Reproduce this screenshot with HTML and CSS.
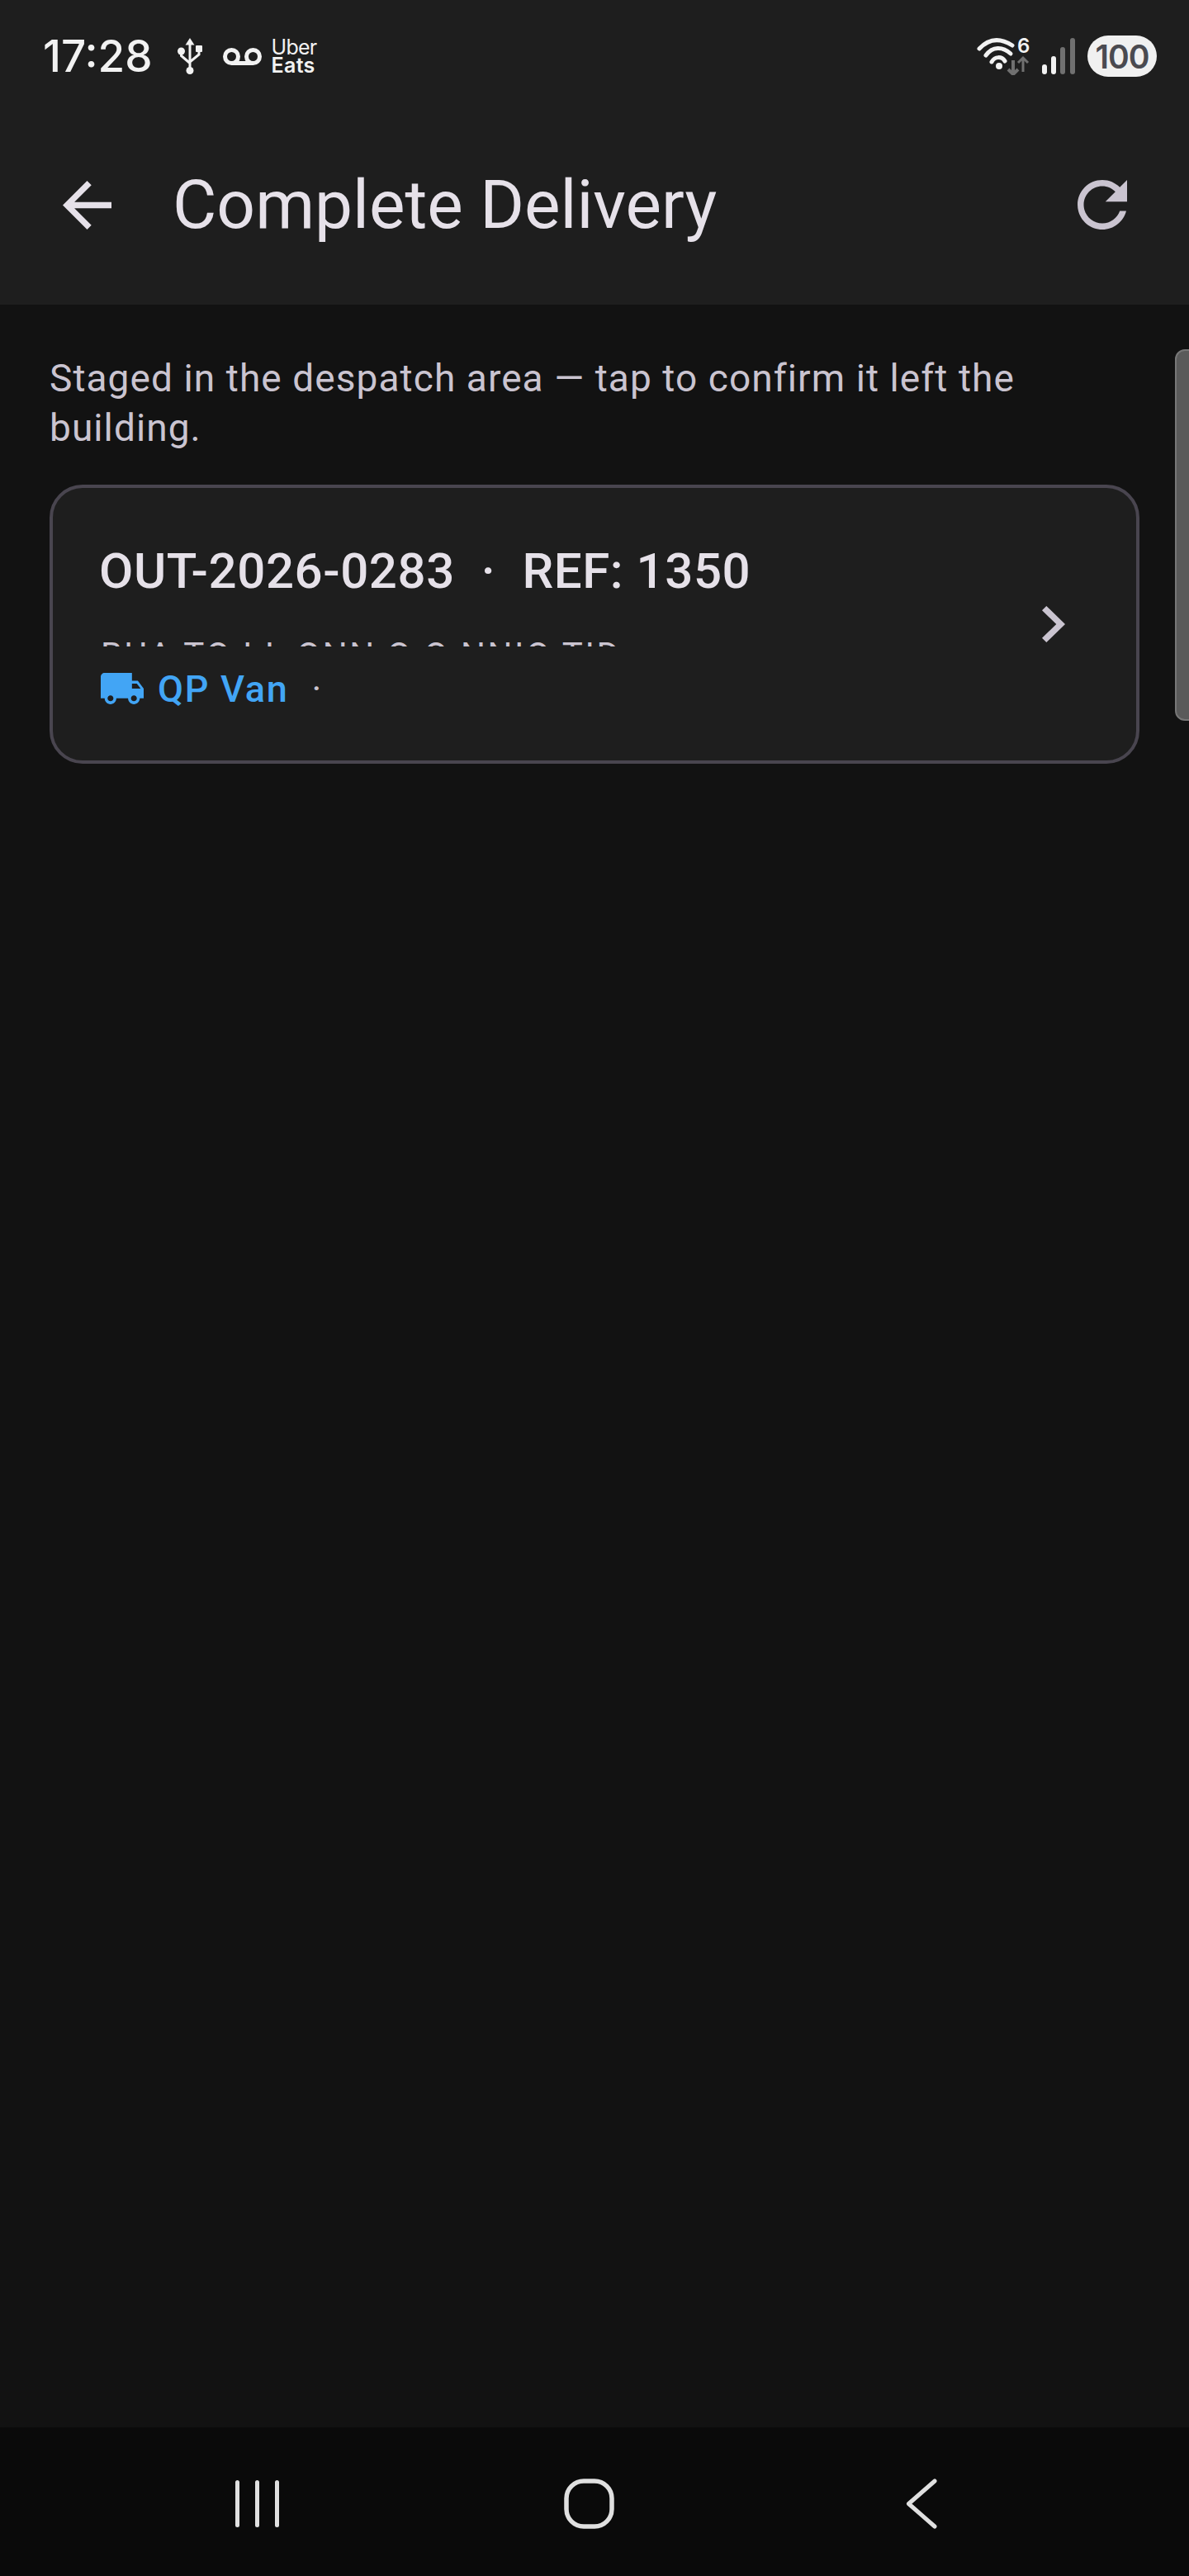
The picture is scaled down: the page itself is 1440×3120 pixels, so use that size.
FILE: index.html
```html
<!DOCTYPE html>
<html>
<head>
    <title>Complete Delivery</title>
    <link rel="stylesheet" href="styles.css">
</head>
<body>
    <div class="screen">
        <header class="top">
            <div class="status">
                <div class="status-left">
                    <span class="time">17:28</span>
                    <svg class="ic-usb" width="30" height="44" viewBox="0 0 30 44">
                        <path d="M15 0l5.500 8.500h-11z" fill="#f2f2f2"/>
                        <path d="M15 8v31M4.500 16v5.500L15 30.500M26 13v7l-11 9" fill="none" stroke="#f2f2f2" stroke-width="3"/>
                        <circle cx="15" cy="39.500" r="4.500" fill="#f2f2f2"/>
                        <circle cx="4.500" cy="16" r="4.500" fill="#f2f2f2"/>
                        <rect x="22" y="9" width="8" height="8" rx="1" fill="#f2f2f2"/>
                    </svg>
                    <svg class="ic-voicemail" width="47" height="21" viewBox="0 0 47 21">
                        <circle cx="10.500" cy="10.500" r="8" fill="none" stroke="#f2f2f2" stroke-width="5"/>
                        <circle cx="36.500" cy="10.500" r="8" fill="none" stroke="#f2f2f2" stroke-width="5"/>
                        <path d="M10.500 18.500h26" stroke="#f2f2f2" stroke-width="5"/>
                    </svg>
                    <div class="uber"><span class="uber-a">Uber</span><span class="uber-b">Eats</span></div>
                </div>
                <div class="status-right">
                    <svg class="ic-wifi" width="68" height="46" viewBox="0 0 68 46">
                        <g fill="none" stroke="#f2f2f2" stroke-width="5" stroke-linecap="round">
                            <path d="M6 14C18 1 32 1 46 10"/>
                            <path d="M14 22C22 11 34 11 44 20"/>
                            <path d="M21 30C25 23 33 23 37 29"/>
                        </g>
                        <circle cx="30" cy="35" r="4" fill="#f2f2f2"/>
                        <text x="52" y="19" class="wifi-six">6</text>
                        <path d="M47 28v17M41 39l6 6l6-6" fill="none" stroke="#707070" stroke-width="4"/>
                        <path d="M59 42v-17M53 31l6-6l6 6" fill="none" stroke="#707070" stroke-width="3"/>
                    </svg>
                    <svg class="ic-signal" width="40" height="44" viewBox="0 0 40 44">
                        <rect x="0" y="32" width="6" height="12" rx="3" fill="#f2f2f2"/>
                        <rect x="11" y="22" width="6" height="22" rx="3" fill="#f2f2f2"/>
                        <rect x="22" y="11" width="6" height="33" rx="3" fill="#707070"/>
                        <rect x="34" y="0" width="6" height="44" rx="3" fill="#707070"/>
                    </svg>
                    <span class="battery">100</span>
                </div>
            </div>
            <div class="appbar">
                <svg class="ic-back" width="59" height="59" viewBox="4 4 16 16">
                    <path d="M20 11H7.830l5.590-5.590L12 4l-8 8 8 8 1.410-1.410L7.830 13H20v-2z" fill="#e6e1e9"/>
                </svg>
                <h1 class="title">Complete Delivery</h1>
                <svg class="ic-refresh" width="60" height="60" viewBox="4 4 16 16">
                    <path d="M17.650 6.350C16.200 4.900 14.210 4 12 4c-4.420 0-7.990 3.580-7.990 8s3.570 8 7.990 8c3.730 0 6.840-2.550 7.730-6h-2.080c-.82 2.330-3.040 4-5.650 4-3.310 0-6-2.690-6-6s2.690-6 6-6c1.660 0 3.140.69 4.220 1.780L13 11h7V4l-2.350 2.350z" fill="#cac4d0"/>
                </svg>
            </div>
        </header>

        <main class="content">
            <p class="hint">Staged in the despatch area — tap to confirm it left the building.</p>
            <div class="card">
                <div class="card-body">
                    <div class="card-title">
                        <span>OUT-2026-0283</span>
                        <span>·</span>
                        <span>REF: 1350</span>
                    </div>
                    <div class="clip">BUA TO I L ONN O O NNIO TID</div>
                    <div class="meta">
                        <svg class="ic-truck" width="52" height="38" viewBox="1 4 22 16">
                            <path d="M20 8h-3V4H3c-1.100 0-2 .9-2 2v11h2c0 1.660 1.340 3 3 3s3-1.340 3-3h6c0 1.660 1.340 3 3 3s3-1.340 3-3h2v-5l-3-4zM6 18.500c-.83 0-1.500-.67-1.500-1.500s.67-1.500 1.500-1.500 1.500.67 1.500 1.500-.67 1.500-1.500 1.500zm13.500-9l1.960 2.500H17V9.500h2.500zm-1.500 9c-.83 0-1.500-.67-1.500-1.500s.67-1.500 1.500-1.500 1.500.67 1.500 1.500-.67 1.500-1.500 1.500z" fill="#42a5f5"/>
                        </svg>
                        <span class="van">QP Van</span>
                        <span class="meta-dot">·</span>
                    </div>
                </div>
                <svg class="ic-chevron" width="28" height="44" viewBox="8.590 6 7.410 12" preserveAspectRatio="none">
                    <path d="M10 6L8.590 7.410 13.170 12l-4.580 4.590L10 18l6-6z" fill="#cac4d0"/>
                </svg>
            </div>
            <div class="scrollbar"></div>
        </main>

        <nav class="navbar">
            <svg class="nav-recent" width="53" height="57" viewBox="0 0 53 57">
                <path d="M2.500 2.500v52M26.500 2.500v52M50.500 2.500v52" stroke="#e0e0e0" stroke-width="5" stroke-linecap="round"/>
            </svg>
            <svg class="nav-home" width="61" height="61" viewBox="0 0 61 61">
                <rect x="3" y="3" width="55" height="55" rx="21" fill="none" stroke="#e0e0e0" stroke-width="5.500"/>
            </svg>
            <svg class="nav-back" width="38" height="61" viewBox="0 0 38 61">
                <path d="M35 3L3.500 30.500 35 58" fill="none" stroke="#e0e0e0" stroke-width="5" stroke-linecap="round" stroke-linejoin="round"/>
            </svg>
        </nav>
    </div>
</body>
</html>
```

FILE: styles.css
```css
* {
    box-sizing: border-box;
}
body {
    margin: 0;
    padding: 0;
    background-color: #121212;
    font-family: Roboto, sans-serif;
}
.screen {
    width: 1440px;
    height: 3120px;
    display: flex;
    flex-direction: column;
    overflow: hidden;
}
.top {
    height: 369px;
    background-color: #1e1e1e;
    flex: none;
}
.status {
    height: 136px;
    padding: 0 39px 0 52px;
    display: flex;
    justify-content: space-between;
    align-items: center;
}
.status-left, .status-right {
    display: flex;
    align-items: center;
}
.time {
    font-family: Inter, sans-serif;
    font-size: 53px;
    font-weight: 500;
    color: #f2f2f2;
}
.ic-usb {
    margin-left: 30px;
}
.ic-voicemail {
    margin-left: 25px;
}
.uber {
    margin-left: 12px;
    display: flex;
    flex-direction: column;
    font-family: Inter, sans-serif;
    color: #f2f2f2;
    line-height: 22px;
}
.uber-a {
    font-size: 25px;
    font-weight: 400;
    letter-spacing: -.8px;
}
.uber-b {
    font-size: 25px;
    font-weight: 600;
    letter-spacing: .3px;
}
.ic-wifi {
    margin-right: 14px;
}
.ic-signal {
    margin-right: 15px;
}
.wifi-six {
    font-family: Inter, sans-serif;
    font-size: 24px;
    font-weight: 600;
    fill: #f2f2f2;
}
.battery {
    width: 84px;
    height: 50px;
    border-radius: 25px;
    background-color: #f0f0f0;
    color: #4a4a50;
    font-family: Inter, sans-serif;
    font-size: 39px;
    font-weight: 600;
    letter-spacing: -1px;
    display: flex;
    align-items: center;
    justify-content: center;
}
.appbar {
    height: 233px;
    padding: 0 75px 9px 76px;
    display: flex;
    align-items: center;
}
.title {
    margin: 0 0 0 74px;
    flex: 1;
    font-size: 82px;
    font-weight: 400;
    color: #e6e1e9;
}
.content {
    flex: 1;
    position: relative;
    padding: 59px 60px 0;
}
.hint {
    margin: 0;
    width: 1220px;
    font-size: 46px;
    line-height: 60px;
    letter-spacing: 1.08px;
    color: #cac4d0;
}
.card {
    margin-top: 39px;
    height: 338px;
    padding: 0 86px 0 58px;
    background-color: #1e1e1e;
    border: 4px solid #49454f;
    border-radius: 40px;
    display: flex;
    align-items: center;
    justify-content: space-between;
}
.card-body {
    align-self: flex-start;
    padding-top: 66px;
}
.card-title {
    display: flex;
    gap: 32px;
    margin-left: -2px;
    font-size: 60px;
    line-height: 70px;
    font-weight: 500;
    letter-spacing: .56px;
    color: #e6e1e9;
}
.clip {
    height: 11px;
    margin-top: 45px;
    overflow: hidden;
    font-size: 42px;
    line-height: 44px;
    letter-spacing: 2.6px;
    color: #cac4d0;
    white-space: nowrap;
}
.meta {
    margin-top: 24px;
    height: 54px;
    display: flex;
    align-items: center;
    gap: 17px;
}
.van {
    font-size: 45px;
    font-weight: 500;
    letter-spacing: 1.7px;
    color: #42a5f5;
}
.meta-dot {
    margin-left: 11px;
    font-size: 45px;
    color: #cac4d0;
}
.scrollbar {
    position: absolute;
    right: -12px;
    top: 54px;
    width: 29px;
    height: 450px;
    background-color: #5a5a5a;
    border: 2px solid #777;
    border-radius: 12px;
}
.navbar {
    height: 180px;
    flex: none;
    background-color: #0a0a0a;
    display: flex;
    align-items: center;
    padding: 5px 0 0 285px;
}
.nav-home {
    margin-left: 345px;
}
.nav-back {
    margin-left: 353px;
}
```
